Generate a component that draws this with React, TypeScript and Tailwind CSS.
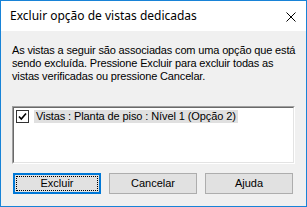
import React from "react";

function Button({ label, focused }: { label: string; focused?: boolean }) {
  if (focused) {
    return (
      <div className="w-[88px] h-[21px] border-2 border-[#0078d7] bg-[#e1e1e1] p-px">
        <div className="w-full h-full border border-dotted border-black flex items-center justify-center">
          {label}
        </div>
      </div>
    );
  }
  return (
    <div className="w-[88px] h-[21px] border border-[#adadad] bg-[#e1e1e1] flex items-center justify-center">
      {label}
    </div>
  );
}

export default function App() {
  return (
    <div className="w-[307px] h-[207px] border border-[#1883d7] flex flex-col bg-[#f0f0f0] text-black overflow-hidden">
      {/* title bar */}
      <div className="h-[30px] bg-white flex items-center justify-between pl-[9px] pr-[10px] text-[12px] font-['Noto_Sans',sans-serif]">
        <span className="mt-[-1px]">Excluir opção de vistas dedicadas</span>
        <svg width="10" height="10" viewBox="0 0 10 10" className="mt-[1px]">
          <path d="M0.5 0.5 L9.5 9.5 M9.5 0.5 L0.5 9.5" stroke="#000" strokeWidth="1" />
        </svg>
      </div>

      {/* body */}
      <div className="flex-1 flex flex-col px-[11px] pt-[13px] text-[11px] leading-[13px] font-['Liberation_Sans',sans-serif]">
        <p className="whitespace-nowrap tracking-[-0.15px]">
          As vistas a seguir são associadas com uma opção que está
          <br />
          sendo excluída. Pressione Excluir para excluir todas as
          <br />
          vistas verificadas ou pressione Cancelar.
        </p>

        <div className="mt-[23px] h-[58px] border-t border-l border-t-[#a0a0a0] border-l-[#a0a0a0] border-r border-b border-r-white border-b-white">
          <div className="h-full border-t border-l border-t-[#696969] border-l-[#696969] border-r border-b border-r-[#e3e3e3] border-b-[#e3e3e3] bg-white px-[2px] pt-[2px]">
            <div className="flex items-center gap-[5px]">
              <div className="w-[13px] h-[13px] border border-[#333] bg-white flex items-center justify-center">
                <svg width="9" height="9" viewBox="0 0 9 9">
                  <path d="M1 4.5 L3.3 7 L8 1.5" fill="none" stroke="#000" strokeWidth="1.6" />
                </svg>
              </div>
              <span className="bg-[#e0e0e0] px-[2px] h-[13px] leading-[13px] tracking-[-0.1px]">
                Vistas : Planta de piso : Nível 1 (Opção 2)
              </span>
            </div>
          </div>
        </div>

        <div className="mt-[9px] flex gap-[8px] ml-[1px]">
          <Button label="Excluir" focused />
          <Button label="Cancelar" />
          <Button label="Ajuda" />
        </div>
      </div>
    </div>
  );
}
